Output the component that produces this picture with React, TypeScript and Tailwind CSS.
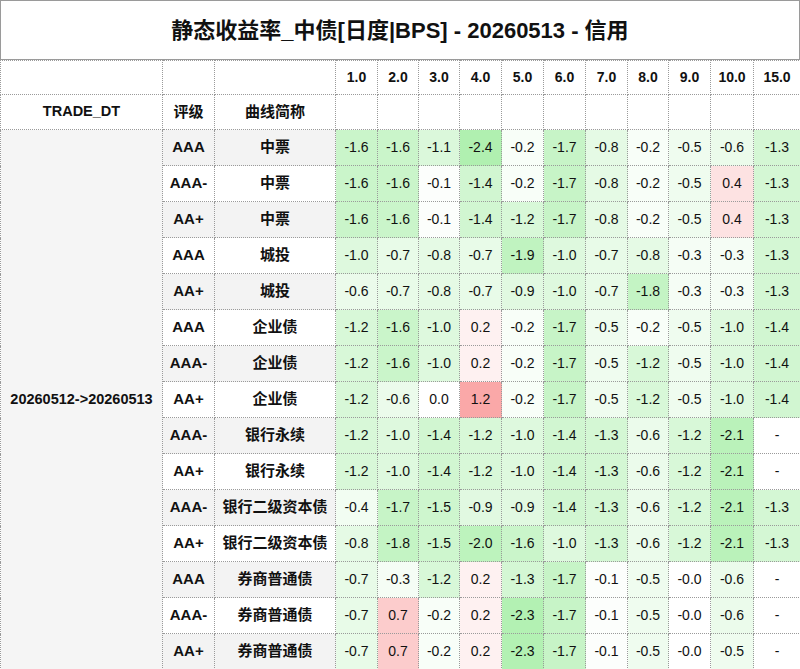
import React, { FC } from "react";

type Row = { rating: string; name: string; values: (number | null)[] };

const TENORS = ["1.0", "2.0", "3.0", "4.0", "5.0", "6.0", "7.0", "8.0", "9.0", "10.0", "15.0"];
const TENOR_WIDTHS = [42, 41, 41, 42, 42, 42, 42, 41, 42, 43, 47];

const ROWS: Row[] = [
  { rating: "AAA", name: "中票", values: [-1.6, -1.6, -1.1, -2.4, -0.2, -1.7, -0.8, -0.2, -0.5, -0.6, -1.3] },
  { rating: "AAA-", name: "中票", values: [-1.6, -1.6, -0.1, -1.4, -0.2, -1.7, -0.8, -0.2, -0.5, 0.4, -1.3] },
  { rating: "AA+", name: "中票", values: [-1.6, -1.6, -0.1, -1.4, -1.2, -1.7, -0.8, -0.2, -0.5, 0.4, -1.3] },
  { rating: "AAA", name: "城投", values: [-1.0, -0.7, -0.8, -0.7, -1.9, -1.0, -0.7, -0.8, -0.3, -0.3, -1.3] },
  { rating: "AA+", name: "城投", values: [-0.6, -0.7, -0.8, -0.7, -0.9, -1.0, -0.7, -1.8, -0.3, -0.3, -1.3] },
  { rating: "AAA", name: "企业债", values: [-1.2, -1.6, -1.0, 0.2, -0.2, -1.7, -0.5, -0.2, -0.5, -1.0, -1.4] },
  { rating: "AAA-", name: "企业债", values: [-1.2, -1.6, -1.0, 0.2, -0.2, -1.7, -0.5, -1.2, -0.5, -1.0, -1.4] },
  { rating: "AA+", name: "企业债", values: [-1.2, -0.6, 0.0, 1.2, -0.2, -1.7, -0.5, -1.2, -0.5, -1.0, -1.4] },
  { rating: "AAA-", name: "银行永续", values: [-1.2, -1.0, -1.4, -1.2, -1.0, -1.4, -1.3, -0.6, -1.2, -2.1, null] },
  { rating: "AA+", name: "银行永续", values: [-1.2, -1.0, -1.4, -1.2, -1.0, -1.4, -1.3, -0.6, -1.2, -2.1, null] },
  { rating: "AAA-", name: "银行二级资本债", values: [-0.4, -1.7, -1.5, -0.9, -0.9, -1.4, -1.3, -0.6, -1.2, -2.1, -1.3] },
  { rating: "AA+", name: "银行二级资本债", values: [-0.8, -1.8, -1.5, -2.0, -1.6, -1.0, -1.3, -0.6, -1.2, -2.1, -1.3] },
  { rating: "AAA", name: "券商普通债", values: [-0.7, -0.3, -1.2, 0.2, -1.3, -1.7, -0.1, -0.5, -0.0, -0.6, null] },
  { rating: "AAA-", name: "券商普通债", values: [-0.7, 0.7, -0.2, 0.2, -2.3, -1.7, -0.1, -0.5, -0.0, -0.6, null] },
  { rating: "AA+", name: "券商普通债", values: [-0.7, 0.7, -0.2, 0.2, -2.3, -1.7, -0.1, -0.5, -0.0, -0.5, null] },
];

const all = ROWS.flatMap((r) => r.values).filter((v): v is number => v !== null);
const minVal = Math.min(...all);
const maxVal = Math.max(...all);

// white -> green for negatives, white -> red for positives
const heat = (v: number | null): string => {
  if (v === null || v === 0) return "#ffffff";
  const full = v < 0 ? [176, 240, 176] : [250, 168, 168];
  const t = v < 0 ? v / minVal : v / maxVal;
  const mix = full.map((c) => Math.round(255 - (255 - c) * t));
  return `rgb(${mix[0]},${mix[1]},${mix[2]})`;
};

const fmt = (v: number | null) => {
  if (v === null) return "-";
  if (Object.is(v, -0)) return "-0.0";
  return v.toFixed(1);
};

const cell = "border border-dotted border-[#9a9a9a] text-center p-0";

const App: FC = () => {
  return (
    <div className="w-[800px] bg-white text-[#111] font-['Liberation_Sans','Noto_Sans_CJK_SC',sans-serif]">
      <div className="h-[60px] flex items-center justify-center border border-[#9a9a9a] text-[22px] font-bold">
        静态收益率_中债[日度|BPS] - 20260513 - 信用
      </div>

      <table className="w-[800px] table-fixed border-collapse text-[14px]">
        <colgroup>
          <col className="w-[162px]" />
          <col className="w-[52px]" />
          <col className="w-[121px]" />
          {TENOR_WIDTHS.map((w, i) => (
            <col key={i} style={{ width: w }} />
          ))}
        </colgroup>
        <tbody>
          <tr className="h-[34px] font-bold">
            <td className={cell} />
            <td className={cell} />
            <td className={cell} />
            {TENORS.map((t) => (
              <td key={t} className={cell}>
                {t}
              </td>
            ))}
          </tr>
          <tr className="h-[35px] font-bold">
            <td className={`${cell} text-[14.5px]`}>TRADE_DT</td>
            <td className={`${cell} text-[15px]`}>评级</td>
            <td className={`${cell} text-[15px]`}>曲线简称</td>
            {TENORS.map((t) => (
              <td key={t} className={cell} />
            ))}
          </tr>
          {ROWS.map((row, i) => {
            const side = i % 2 === 0 ? "bg-[#f3f3f3]" : "bg-white";
            return (
              <tr key={i} className="h-[36px]">
                {i === 0 && (
                  <td rowSpan={ROWS.length} className={`${cell} bg-[#f5f5f5] font-bold text-[14.5px]`}>
                    20260512-&gt;20260513
                  </td>
                )}
                <td className={`${cell} ${side} font-bold text-[15px]`}>{row.rating}</td>
                <td className={`${cell} ${side} font-bold text-[15px]`}>{row.name}</td>
                {row.values.map((v, j) => (
                  <td key={j} className={cell} style={{ backgroundColor: heat(v) }}>
                    {fmt(v)}
                  </td>
                ))}
              </tr>
            );
          })}
        </tbody>
      </table>
    </div>
  );
};

export default App;
